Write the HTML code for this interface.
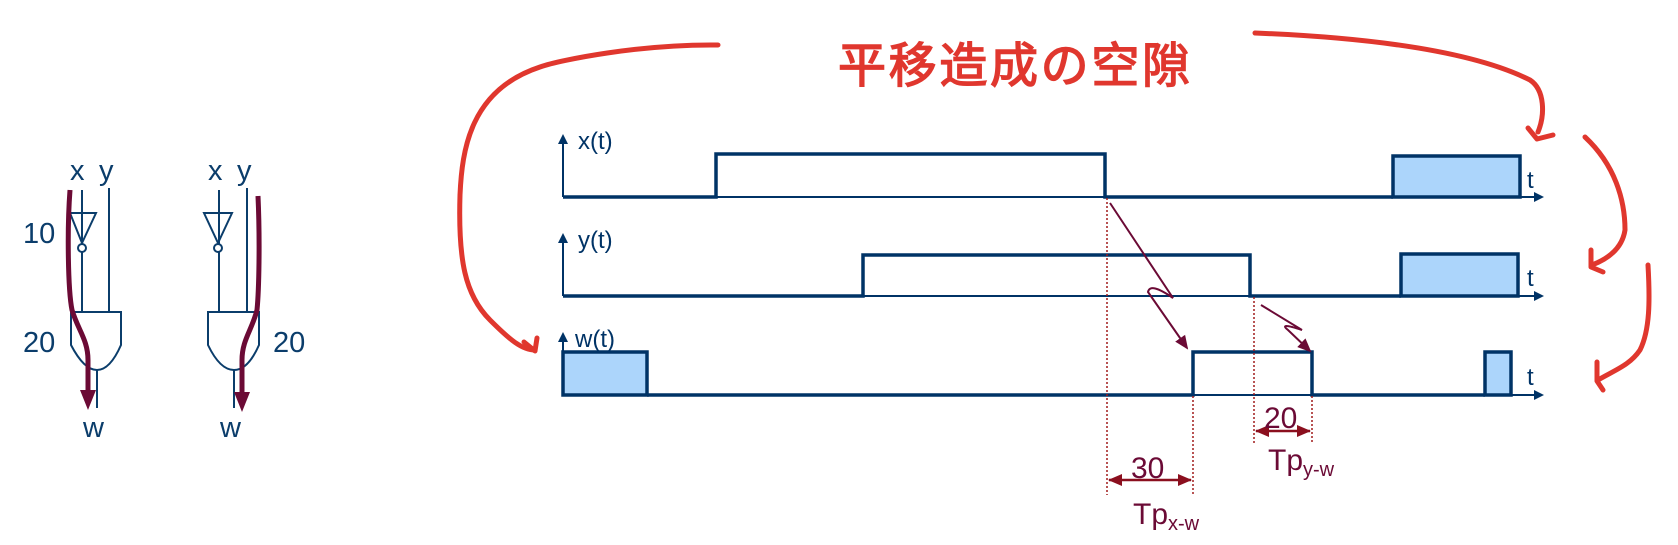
<!DOCTYPE html>
<html><head><meta charset="utf-8"><style>
html,body{margin:0;padding:0;background:#fff;width:1678px;height:545px;overflow:hidden}
svg{display:block}
text{font-family:"Liberation Sans",sans-serif}
</style></head><body>
<svg width="1678" height="545" viewBox="0 0 1678 545" xmlns="http://www.w3.org/2000/svg">
<defs>
<marker id="ah" markerWidth="10" markerHeight="10" refX="8" refY="5" orient="auto" markerUnits="userSpaceOnUse"><path d="M0,0 L10,5 L0,10 Z" fill="#003366"/></marker>
<marker id="mr" markerWidth="14" markerHeight="14" refX="12" refY="7" orient="auto" markerUnits="userSpaceOnUse"><path d="M0,1 L14,7 L0,13 Z" fill="#6b0a35"/></marker>
<marker id="dm" markerWidth="14" markerHeight="12" refX="13" refY="6" orient="auto-start-reverse" markerUnits="userSpaceOnUse"><path d="M0,0 L14,6 L0,12 Z" fill="#8b0f1e"/></marker>
</defs>

<g fill="none" stroke="#0b3d6b" stroke-width="2">
<line x1="82" y1="190" x2="82" y2="312"/>
<path d="M70,213 L96,213 L82,243 Z"/>
<circle cx="82" cy="248" r="4" fill="#fff"/>
<line x1="109" y1="188" x2="109" y2="312"/>
<path d="M71,312 L121,312 L121,345 Q110,370 97,370 Q84,370 71,345 Z"/>
<line x1="97" y1="370" x2="97" y2="408"/>
<line x1="219" y1="190" x2="219" y2="312"/>
<path d="M204,213 L232,213 L218,243 Z"/>
<circle cx="218" cy="248" r="4" fill="#fff"/>
<line x1="247" y1="188" x2="247" y2="312"/>
<path d="M208,312 L259,312 L259,345 Q248,370 234,370 Q220,370 208,345 Z"/>
<line x1="234" y1="370" x2="234" y2="408"/>
</g>
<g fill="#0b3d6b" font-size="29">
<text x="70" y="180">x</text><text x="99" y="180">y</text>
<text x="208" y="180">x</text><text x="237" y="180">y</text>
<text x="83" y="437">w</text><text x="220" y="437">w</text>
<text x="23" y="243">10</text><text x="23" y="352">20</text><text x="273" y="352">20</text>
</g>
<g fill="none" stroke="#6b0a35" stroke-width="5">
<path d="M70,190 C67,230 68,290 72,310 C78,330 88,340 88,360 L88,392"/>
<path d="M258,196 C260,240 259,290 257,310 C252,330 242,340 242,360 L242,392"/>
</g>
<path d="M80,390 L96,390 L88,410 Z" fill="#6b0a35"/>
<path d="M234,392 L250,392 L242,412 Z" fill="#6b0a35"/>

<g fill="none" stroke="#003366" stroke-width="2">
<line x1="563" y1="197" x2="563" y2="136" marker-end="url(#ah)"/>
<line x1="563" y1="296" x2="563" y2="235" marker-end="url(#ah)"/>
<line x1="563" y1="395" x2="563" y2="334" marker-end="url(#ah)"/>
<line x1="563" y1="197" x2="1542" y2="197" marker-end="url(#ah)"/>
<line x1="563" y1="296" x2="1542" y2="296" marker-end="url(#ah)"/>
<line x1="563" y1="395" x2="1542" y2="395" marker-end="url(#ah)"/>
</g>
<g fill="none" stroke="#003366" stroke-width="3.5">
<path d="M563,197 L716,197 L716,154 L1105,154 L1105,197 L1393,197"/>
<path d="M563,296 L863,296 L863,255 L1250,255 L1250,296 L1401,296"/>
<path d="M647,395 L1193,395 L1193,352 L1312,352 L1312,395 L1485,395"/>
</g>
<g fill="#acd5fb" stroke="#003366" stroke-width="3.5">
<rect x="1393" y="156" width="127" height="41"/>
<rect x="1401" y="254" width="117" height="42"/>
<rect x="563" y="352" width="84" height="43"/>
<rect x="1485" y="352" width="26" height="43"/>
</g>
<g fill="#003366" font-size="24">
<text x="578" y="149">x(t)</text><text x="578" y="248">y(t)</text><text x="575" y="347">w(t)</text>
<text x="1527" y="188">t</text><text x="1527" y="286">t</text><text x="1527" y="385">t</text>
</g>

<g stroke="#a01a1a" stroke-width="1.5" stroke-dasharray="2,2">
<line x1="1107" y1="198" x2="1107" y2="495"/>
<line x1="1193" y1="396" x2="1193" y2="495"/>
<line x1="1254" y1="297" x2="1254" y2="445"/>
<line x1="1312" y1="396" x2="1312" y2="442"/>
</g>
<g stroke="#8b0f1e" stroke-width="2.5" fill="none">
<line x1="1109" y1="480" x2="1191" y2="480" marker-start="url(#dm)" marker-end="url(#dm)"/>
<line x1="1256" y1="431" x2="1310" y2="431" marker-start="url(#dm)" marker-end="url(#dm)"/>
</g>
<g fill="#6b0a35" font-size="30">
<text x="1131" y="478">30</text>
<text x="1264" y="428">20</text>
<text x="1133" y="524">Tp<tspan font-size="20" dy="6">x-w</tspan></text>
<text x="1268" y="470">Tp<tspan font-size="20" dy="6">y-w</tspan></text>
</g>
<g fill="none" stroke="#6b0a35" stroke-width="2">
<path d="M1110,203 L1173,298 Q1150,282 1148,292 L1187,348" marker-end="url(#mr)"/>
<path d="M1261,305 L1302,330 Q1278,322 1288,330 L1310,351" marker-end="url(#mr)"/>
</g>

<g fill="none" stroke="#e0372e" stroke-width="5" stroke-linecap="round" stroke-linejoin="round">
<path d="M718,45 C640,44 560,60 540,67 C470,90 462,150 460,195 C458,260 465,295 490,320 C510,340 522,350 535,350"/>
<path d="M524,342 L535,351 L537,338"/>
<path d="M1255,33 C1330,36 1460,45 1530,80 C1545,90 1545,115 1538,132"/>
<path d="M1528,128 L1537,139 L1553,135"/>
<path d="M1585,137 C1615,165 1625,200 1625,230 C1622,250 1605,260 1592,265"/>
<path d="M1591,250 L1591,267 L1603,272"/>
<path d="M1648,265 C1650,300 1650,330 1640,350 C1630,365 1615,370 1598,380"/>
<path d="M1597,362 L1597,381 L1603,390"/>
</g>
<text x="838" y="82" font-size="48" fill="#e0372e" stroke="#e0372e" stroke-width="1.5" font-family="'Liberation Sans','Noto Sans CJK JP',sans-serif" textLength="352" lengthAdjust="spacing">平移造成の空隙</text>
</svg>
</body></html>
